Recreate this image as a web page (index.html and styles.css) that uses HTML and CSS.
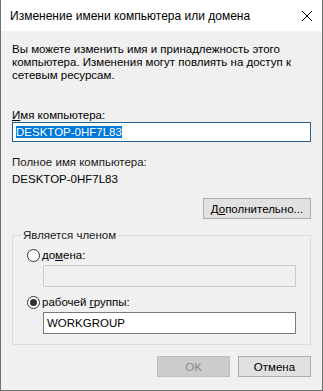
FILE: index.html
```html
<!DOCTYPE html>
<html lang="ru">
<head>
  <meta charset="UTF-8">
  <title>Изменение имени компьютера или домена</title>
  <link rel="stylesheet" href="styles.css">
</head>
<body>
  <div class="window">
    <div class="titlebar">
      <span class="title">Изменение имени компьютера или домена</span>
      <svg class="close" width="12" height="12" viewBox="0 0 12 12">
        <path d="M1 1 L11 11 M11 1 L1 11" stroke="#000" stroke-width="1" fill="none"/>
      </svg>
    </div>

    <div class="content">
      <p class="desc">Вы можете изменить имя и принадлежность этого<br>компьютера. Изменения могут повлиять на доступ к<br>сетевым ресурсам.</p>

      <p class="label"><u>И</u>мя компьютера:</p>
      <div class="textbox focused"><span class="selected">DESKTOP-0HF7L83</span></div>

      <p class="label full">Полное имя компьютера:</p>
      <p class="value">DESKTOP-0HF7L83</p>

      <div class="row-right">
        <button class="btn more">Д<u>о</u>полнительно...</button>
      </div>

      <fieldset class="group">
        <legend>Является членом</legend>
        <div class="radio-row">
          <span class="radio"></span>
          <span>до<u>м</u>ена:</span>
        </div>
        <div class="textbox disabled"></div>
        <div class="radio-row second">
          <span class="radio checked"></span>
          <span>рабочей <u>г</u>руппы:</span>
        </div>
        <div class="textbox">WORKGROUP</div>
      </fieldset>

      <div class="actions">
        <button class="btn disabled-btn">OK</button>
        <button class="btn">Отмена</button>
      </div>
    </div>
  </div>
</body>
</html>
```

FILE: styles.css
```css
* {
  box-sizing: border-box;
  margin: 0;
  padding: 0;
}

body {
  font-family: 'Liberation Sans', Arial, sans-serif;
  font-size: 11.5px;
  color: #000;
  background: #fff;
}

.window {
  width: 323px;
  height: 391px;
  border: 1px solid #707070;
  border-top: none;
  background: #f0f0f0;
  display: flex;
  flex-direction: column;
}

.titlebar {
  height: 31px;
  background: #fff;
  display: flex;
  align-items: center;
  justify-content: space-between;
  padding: 0 9px 0 9px;
}

.title {
  font-size: 12px;
  color: #000;
}

.content {
  flex: 1;
  padding: 12px 11px 0 11px;
  line-height: 13px;
}

.desc {
  line-height: 13px;
}

.label {
  margin-top: 27px;
}

.label.full {
  margin-top: 14px;
  color: #1a1a1a;
}

.value {
  margin-top: 4px;
}

u {
  text-decoration: underline;
  text-underline-offset: 1px;
}

.textbox {
  height: 20px;
  background: #fff;
  border: 1px solid #7a7a7a;
  padding: 2px 3px;
  line-height: 14px;
}

.textbox.focused {
  border-color: #1f5f8b;
}

.selected {
  background: #0078d7;
  color: #fff;
}

.textbox.disabled {
  background: #f0f0f0;
  border-color: #cccccc;
}

.row-right {
  display: flex;
  justify-content: flex-end;
  margin-top: 12px;
}

.btn {
  font-family: inherit;
  font-size: 11.5px;
  height: 21px;
  width: 73px;
  background: #e1e1e1;
  border: 1px solid #adadad;
  color: #000;
}

.btn.more {
  width: 108px;
}

.disabled-btn {
  background: #cccccc;
  border-color: #bfbfbf;
  color: #8a8a8a;
}

.group {
  margin-top: 10px;
  border: 1px solid #dcdcdc;
  padding: 6px 14px 11px 14px;
  height: 116px;
}

.group legend {
  padding: 0 2px;
  margin-left: -6px;
  color: #1a1a1a;
}

.radio-row {
  display: flex;
  align-items: center;
  gap: 2px;
  height: 15px;
}

.radio-row.second {
  margin-top: 8px;
}

.radio {
  width: 13px;
  height: 13px;
  border: 1px solid #333;
  border-radius: 50%;
  background: #fff;
  display: flex;
  align-items: center;
  justify-content: center;
}

.radio.checked::after {
  content: "";
  width: 7px;
  height: 7px;
  border-radius: 50%;
  background: #333;
}

.group .textbox {
  margin: 2px 0 0 16px;
  height: 22px;
  line-height: 16px;
}

.actions {
  display: flex;
  justify-content: flex-end;
  gap: 8px;
  margin-top: 11px;
}
```
